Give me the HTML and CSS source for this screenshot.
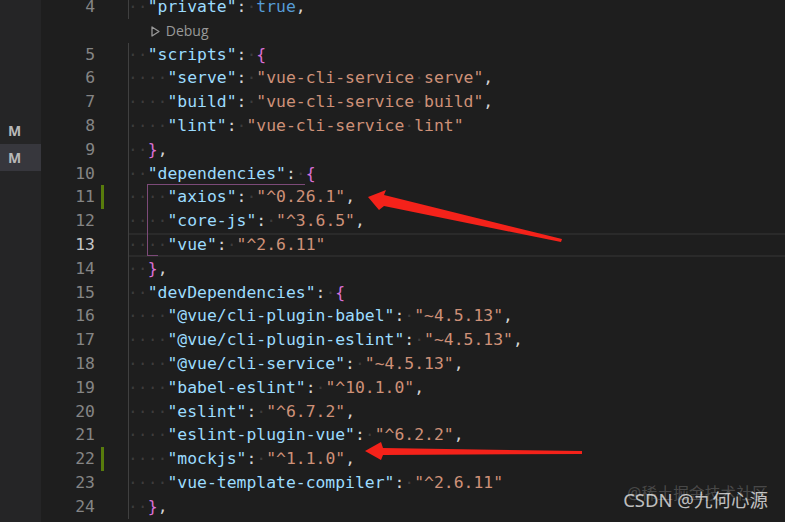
FILE: index.html
```html
<!DOCTYPE html>
<html lang="en">
<head>
<meta charset="utf-8">
<title>package.json</title>
<link rel="stylesheet" href="styles.css">
</head>
<body>
<div class="page">
  <aside class="sidebar">
    <div class="scm-row">M</div>
    <div class="scm-row active">M</div>
  </aside>
  <main class="editor">
    <div class="row"><span class="num">4</span><span class="git"></span><span class="code"><span class="ws">··</span><span class="k">"private"</span><span class="p">:</span><span class="ws">·</span><span class="kw">true</span><span class="p">,</span></span></div>
    <div class="row"><span class="num"></span><span class="git"></span><span class="code lens"><span class="ws-blank">  </span><span class="lens-item"><svg class="lens-icon" width="9" height="11" viewBox="0 0 9 11"><path d="M1 1 L8 5.5 L1 10 Z" fill="none" stroke="#999" stroke-width="1.3" stroke-linejoin="round"/></svg>Debug</span></span></div>
    <div class="row"><span class="num">5</span><span class="git"></span><span class="code"><span class="ws">··</span><span class="k">"scripts"</span><span class="p">:</span><span class="ws">·</span><span class="b">{</span></span></div>
    <div class="row"><span class="num">6</span><span class="git"></span><span class="code"><span class="ws">····</span><span class="k">"serve"</span><span class="p">:</span><span class="ws">·</span><span class="s">"vue-cli-service<span class="ws">·</span>serve"</span><span class="p">,</span></span></div>
    <div class="row"><span class="num">7</span><span class="git"></span><span class="code"><span class="ws">····</span><span class="k">"build"</span><span class="p">:</span><span class="ws">·</span><span class="s">"vue-cli-service<span class="ws">·</span>build"</span><span class="p">,</span></span></div>
    <div class="row"><span class="num">8</span><span class="git"></span><span class="code"><span class="ws">····</span><span class="k">"lint"</span><span class="p">:</span><span class="ws">·</span><span class="s">"vue-cli-service<span class="ws">·</span>lint"</span></span></div>
    <div class="row"><span class="num">9</span><span class="git"></span><span class="code"><span class="ws">··</span><span class="b">}</span><span class="p">,</span></span></div>
    <div class="row"><span class="num">10</span><span class="git"></span><span class="code"><span class="ws">··</span><span class="k">"dependencies"</span><span class="p">:</span><span class="ws">·</span><span class="b">{</span></span></div>
    <div class="row"><span class="num">11</span><span class="git add"></span><span class="code"><span class="ws">····</span><span class="k">"axios"</span><span class="p">:</span><span class="ws">·</span><span class="s">"^0.26.1"</span><span class="p">,</span></span></div>
    <div class="row"><span class="num">12</span><span class="git"></span><span class="code"><span class="ws">····</span><span class="k">"core-js"</span><span class="p">:</span><span class="ws">·</span><span class="s">"^3.6.5"</span><span class="p">,</span></span></div>
    <div class="row current"><span class="num">13</span><span class="git"></span><span class="code"><span class="ws">····</span><span class="k">"vue"</span><span class="p">:</span><span class="ws">·</span><span class="s">"^2.6.11"</span></span></div>
    <div class="row"><span class="num">14</span><span class="git"></span><span class="code"><span class="ws">··</span><span class="b">}</span><span class="p">,</span></span></div>
    <div class="row"><span class="num">15</span><span class="git"></span><span class="code"><span class="ws">··</span><span class="k">"devDependencies"</span><span class="p">:</span><span class="ws">·</span><span class="b">{</span></span></div>
    <div class="row"><span class="num">16</span><span class="git"></span><span class="code"><span class="ws">····</span><span class="k">"@vue/cli-plugin-babel"</span><span class="p">:</span><span class="ws">·</span><span class="s">"~4.5.13"</span><span class="p">,</span></span></div>
    <div class="row"><span class="num">17</span><span class="git"></span><span class="code"><span class="ws">····</span><span class="k">"@vue/cli-plugin-eslint"</span><span class="p">:</span><span class="ws">·</span><span class="s">"~4.5.13"</span><span class="p">,</span></span></div>
    <div class="row"><span class="num">18</span><span class="git"></span><span class="code"><span class="ws">····</span><span class="k">"@vue/cli-service"</span><span class="p">:</span><span class="ws">·</span><span class="s">"~4.5.13"</span><span class="p">,</span></span></div>
    <div class="row"><span class="num">19</span><span class="git"></span><span class="code"><span class="ws">····</span><span class="k">"babel-eslint"</span><span class="p">:</span><span class="ws">·</span><span class="s">"^10.1.0"</span><span class="p">,</span></span></div>
    <div class="row"><span class="num">20</span><span class="git"></span><span class="code"><span class="ws">····</span><span class="k">"eslint"</span><span class="p">:</span><span class="ws">·</span><span class="s">"^6.7.2"</span><span class="p">,</span></span></div>
    <div class="row"><span class="num">21</span><span class="git"></span><span class="code"><span class="ws">····</span><span class="k">"eslint-plugin-vue"</span><span class="p">:</span><span class="ws">·</span><span class="s">"^6.2.2"</span><span class="p">,</span></span></div>
    <div class="row"><span class="num">22</span><span class="git add"></span><span class="code"><span class="ws">····</span><span class="k">"mockjs"</span><span class="p">:</span><span class="ws">·</span><span class="s">"^1.1.0"</span><span class="p">,</span></span></div>
    <div class="row"><span class="num">23</span><span class="git"></span><span class="code"><span class="ws">····</span><span class="k">"vue-template-compiler"</span><span class="p">:</span><span class="ws">·</span><span class="s">"^2.6.11"</span></span></div>
    <div class="row"><span class="num">24</span><span class="git"></span><span class="code"><span class="ws">··</span><span class="b">}</span><span class="p">,</span></span></div>
  </main>

  <div class="bracket-guide"></div>

  <svg class="arrows" width="785" height="522" viewBox="0 0 785 522">
    <polygon points="368,197 386,190 384,195 562,239 561,242 384,206 379,210" fill="#f4221a"/>
    <polygon points="365,451 381,442 383,448 582,451 582,454 383,455 381,460" fill="#f4221a"/>
  </svg>

  <div class="watermark">
    <span class="wm-back">@稀土掘金技术社区</span>
    <span class="wm-front">CSDN @九何心源</span>
  </div>
</div>
</body>
</html>
```
FILE: styles.css
```css
* { box-sizing: border-box; }

html, body {
  margin: 0;
  padding: 0;
  background: #1e1e1e;
}

.page {
  position: relative;
  width: 785px;
  height: 522px;
  overflow: hidden;
  display: flex;
  background: #1e1e1e;
}

.sidebar {
  width: 41px;
  flex: none;
  background: #252526;
  padding-top: 117px;
  display: flex;
  flex-direction: column;
}

.scm-row {
  height: 27px;
  display: flex;
  align-items: center;
  padding-left: 8px;
  font-family: "Open Sans", "Noto Sans", sans-serif;
  font-weight: 700;
  font-size: 14px;
  color: #b8b8b8;
}

.scm-row.active {
  background: #37373d;
}

.editor {
  flex: 1;
  margin-top: -5px;
  font-family: "DejaVu Sans Mono", "Liberation Mono", monospace;
  font-size: 16.4px;
}

.row {
  display: flex;
  height: 23.8px;
  line-height: 23.8px;
}

.num {
  width: 54px;
  flex: none;
  text-align: right;
  color: #858585;
}

.row.current .num {
  color: #c6c6c6;
}

.git {
  width: 3px;
  flex: none;
  margin-left: 6px;
  margin-right: 24px;
}

.git.add {
  background: #587c0c;
}

.code {
  flex: 1;
  white-space: pre;
  color: #d4d4d4;
  box-shadow: inset 1px 0 #404040;
}

.row.current .code {
  box-shadow: inset 1px 0 #404040, inset 0 2px #2a2a2a, inset 0 -2px #2a2a2a;
}

.code.lens {
  box-shadow: none;
  display: flex;
  align-items: center;
}

.lens-item {
  display: inline-flex;
  align-items: center;
  font-family: "Open Sans", "Noto Sans", sans-serif;
  font-size: 14px;
  color: #999999;
  padding-left: 3px;
}

.lens-icon {
  margin-right: 6px;
  margin-top: 1px;
}

.ws { color: rgba(227, 228, 226, 0.16); }
.k { color: #9cdcfe; }
.s { color: #ce9178; }
.kw { color: #569cd6; }
.p { color: #d4d4d4; }
.b { color: #da70d6; }

.bracket-guide {
  position: absolute;
  left: 147px;
  top: 184px;
  width: 158px;
  height: 72px;
  border-top: 1px solid #7c4a78;
  border-left: 1px solid #7c4a78;
  pointer-events: none;
}

.bracket-guide::after {
  content: "";
  position: absolute;
  left: -1px;
  bottom: 0;
  width: 11px;
  border-bottom: 1px solid #7c4a78;
}

.arrows {
  position: absolute;
  left: 0;
  top: 0;
  pointer-events: none;
}

.watermark {
  position: absolute;
  right: 17px;
  bottom: 8px;
  width: 150px;
  height: 30px;
  font-family: "Noto Sans", "Noto Sans CJK SC", sans-serif;
}

.wm-back {
  position: absolute;
  right: 0;
  top: -3px;
  font-size: 15.5px;
  color: rgba(255, 255, 255, 0.2);
  white-space: nowrap;
  letter-spacing: 0.3px;
}

.wm-front {
  position: absolute;
  right: 0;
  top: 2px;
  font-family: "Noto Sans", "Noto Sans CJK SC", sans-serif;
  font-size: 18.5px;
  color: rgba(255, 255, 255, 0.72);
  white-space: nowrap;
}
```
